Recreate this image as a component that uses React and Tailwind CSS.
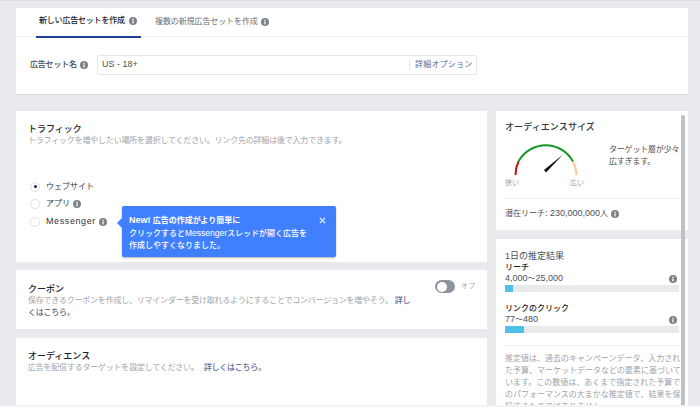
const font = { fontFamily: '"Liberation Sans", "Noto Sans CJK JP", sans-serif' };

function Info({ className = "" }) {
  return (
    <svg viewBox="0 0 10 10" className={`w-[8px] h-[8px] shrink-0 ${className}`}>
      <circle cx="5" cy="5" r="5" fill="#7d8288" />
      <rect x="4.2" y="4.2" width="1.6" height="3.8" fill="#fff" />
      <rect x="4.2" y="2" width="1.6" height="1.5" fill="#fff" />
    </svg>
  );
}

function Radio({ checked }) {
  return (
    <span className="w-[10px] h-[10px] rounded-full border border-[#dddfe2] bg-white flex items-center justify-center shrink-0">
      {checked && <span className="w-[3px] h-[3px] rounded-full bg-[#1d2129]" />}
    </span>
  );
}

function Gauge() {
  return (
    <svg width="76" height="36" viewBox="0 0 76 36" className="block">
      <path d="M2.5 35 A31 31 0 0 1 5.5 21.5" fill="none" stroke="#c2141b" strokeWidth="2" />
      <path d="M5.5 21.5 A31 31 0 0 1 60 21.5" fill="none" stroke="#149425" strokeWidth="2" />
      <path d="M60 21.5 A31 31 0 0 1 63.5 35" fill="none" stroke="#fdc99a" strokeWidth="2" />
      <path d="M31 30 L50 14.5 L33 32.5 Z" fill="#111" />
    </svg>
  );
}

function Bar({ width }) {
  return (
    <div className="h-[7px] bg-[#e9eaed] mt-[1px]">
      <div className="h-full bg-[#4fc0e8]" style={{ width }} />
    </div>
  );
}

export default function App() {
  return (
    <div style={font} className="relative w-[700px] h-[407px] overflow-hidden bg-[#e9eaed] text-[#1d2129]">
      <div className="h-[8px] border-t border-[#dddfe2]" />

      <section className="ml-[16px] w-[672px] h-[87px] bg-white border-b border-[#dddfe2]">
        <div className="h-[29px] flex pl-[20px] border-b border-[#f0f1f3]">
          <div className="w-[105px] h-[30px] border-b-[2px] border-[#1c3f94] flex items-center gap-[3px] pl-[3px] pb-[2px] text-[8px] tracking-[-0.2px] font-medium">
            新しい広告セットを作成 <Info className="ml-[1px]" />
          </div>
          <div className="ml-[14px] flex items-center gap-[3px] pb-[1px] text-[8px] tracking-[-0.1px] text-[#6b6f76]">
            複数の新規広告セットを作成 <Info />
          </div>
        </div>
        <div className="flex items-center pl-[14px] pt-[18px]">
          <div className="w-[67px] flex items-center gap-[3px] text-[8px] tracking-[-0.2px] font-medium text-[#444950]">
            広告セット名 <Info />
          </div>
          <div className="w-[380px] h-[20px] border border-[#e6e7ea] rounded-[2px] flex items-center">
            <span className="pl-[4px] flex-1 text-[9px] text-[#4b4f56]">US - 18+</span>
            <span className="h-[12px] border-l border-[#e6e7ea] pl-[5px] w-[67px] flex items-center text-[8px] tracking-[0.2px] text-[#5b6b95]">詳細オプション</span>
          </div>
        </div>
      </section>

      <div className="flex pl-[16px] pt-[16px] gap-[9px]">
        <main className="w-[471px] flex flex-col">
          <section className="h-[151px] bg-white pl-[12px] pt-[12px] relative">
            <h2 className="text-[9px] font-medium leading-[12px]">トラフィック</h2>
            <p className="text-[8px] leading-[11px] text-[#a0a3a8] tracking-[-0.2px]">トラフィックを増やしたい場所を選択してください。リンク先の詳細は後で入力できます。</p>
            <div className="mt-[35px] flex flex-col gap-[6.5px] text-[8px] text-[#30343a]">
              <div className="h-[11px] flex items-center gap-[6px] pl-[2px]"><Radio checked /> ウェブサイト</div>
              <div className="h-[11px] flex items-center gap-[6px] pl-[2px]"><Radio /> アプリ <Info className="-ml-[3px]" /></div>
              <div className="h-[11px] flex items-center gap-[6px] pl-[2px]"><Radio /> <span className="text-[9px] tracking-[0.6px]">Messenger</span> <Info className="-ml-[3px]" /></div>
            </div>
            <div className="absolute left-[106px] top-[95px] w-[214px] h-[51px] bg-[#4080ff] rounded-[2px] shadow-[0_1px_2px_rgba(0,0,0,0.3)] text-white text-[8px] leading-[12px] pl-[7px] pt-[8px] font-medium">
              <span className="absolute -left-[5px] top-[12px] w-0 h-0 border-y-[5px] border-y-transparent border-r-[5px] border-r-[#4080ff]" />
              <div className="font-bold"><span className="text-[9px]">New!</span> 広告の作成がより簡単に</div>
              <div>クリックすると<span className="text-[8.5px]">Messenger</span>スレッドが開く広告を</div>
              <div>作成しやすくなりました。</div>
              <svg viewBox="0 0 8 8" className="absolute right-[10px] top-[11px] w-[7px] h-[7px]">
                <path d="M1 1 L7 7 M7 1 L1 7" stroke="#dce8ff" strokeWidth="1.6" />
              </svg>
            </div>
          </section>

          <section className="mt-[8px] h-[59px] bg-white pl-[12px] pt-[13px] relative">
            <h2 className="text-[9px] font-medium leading-[12px]">クーポン</h2>
            <p className="w-[389px] text-[8px] leading-[12px] text-[#a0a3a8] tracking-[-0.22px]">
              保存できるクーポンを作成し、リマインダーを受け取れるようにすることでコンバージョンを増やそう。 <span className="text-[#5b6b95] font-medium">詳しくはこちら。</span>
            </p>
            <div className="absolute left-[419px] top-[10px] flex items-center gap-[6px]">
              <span className="w-[20px] h-[13px] rounded-full bg-[#8d949e] p-[1.5px]"><span className="block w-[10px] h-[10px] rounded-full bg-white" /></span>
              <span className="text-[7px] text-[#a0a3a8] tracking-[0.5px]">オフ</span>
            </div>
          </section>

          <section className="mt-[9px] h-[68px] bg-white pl-[12px] pt-[12px]">
            <h2 className="text-[9px] font-medium leading-[12px]">オーディエンス</h2>
            <p className="text-[8px] leading-[11px] text-[#a0a3a8] tracking-[-0.22px]">
              広告を配信するターゲットを設定してください。 <span className="text-[#5b6b95] font-medium ml-[3px]">詳しくはこちら。</span>
            </p>
          </section>
        </main>

        <aside className="w-[192px] flex flex-col">
          <section className="h-[119px] bg-white px-[9px] pt-[10px]">
            <h2 className="text-[9px] font-medium leading-[12px] tracking-[0.1px] text-[#30343a]">オーディエンスサイズ</h2>
            <div className="flex mt-[7px]">
              <div className="w-[103px]">
                <div className="pl-[8px]"><Gauge /></div>
                <div className="flex w-[79px] justify-between text-[7px] leading-[10px] text-[#a0a3a8] mt-[2px]">
                  <span>狭い</span><span>広い</span>
                </div>
              </div>
              <p className="ml-[3px] mt-[4px] text-[8px] leading-[12px] text-[#4b4f56] tracking-[-0.2px] w-[70px] whitespace-nowrap">ターゲット層が少々<br />広すぎます。</p>
            </div>
            <div className="border-t border-[#eceef0] mt-[10px] pt-[8px] flex items-center gap-[3px] text-[8px] leading-[12px] text-[#4b4f56]">
              <span>潜在リーチ<span className="text-[9px]">: 230,000,000</span>人</span> <Info />
            </div>
          </section>

          <section className="mt-[9px] h-[166px] bg-white px-[9px] pt-[11px] overflow-hidden">
            <h2 className="text-[9px] leading-[12px] text-[#4b4f56]">1日の推定結果</h2>
            <div className="text-[8px] font-medium leading-[11px]">リーチ</div>
            <div className="flex items-center justify-between pr-[2px] text-[8px] leading-[11px] text-[#4b4f56]"><span><span className="text-[9px]">4,000</span>〜<span className="text-[9px]">25,000</span></span> <Info /></div>
            <div className="w-[174px]"><Bar width="8px" /></div>
            <div className="text-[8px] font-medium leading-[11px] mt-[11px]">リンクのクリック</div>
            <div className="flex items-center justify-between pr-[2px] text-[8px] leading-[11px] text-[#4b4f56]"><span><span className="text-[9px]">77</span>〜<span className="text-[9px]">480</span></span> <Info /></div>
            <div className="w-[174px]"><Bar width="19px" /></div>
            <div className="border-t border-[#eceef0] mt-[12px] pt-[7px] text-[8px] leading-[12px] text-[#a0a3a8] w-[176px]">
              推定値は、過去のキャンペーンデータ、入力された予算、マーケットデータなどの要素に基づいています。この数値は、あくまで指定された予算でのパフォーマンスの大まかな推定値で、結果を保証するものではありません。
            </div>
          </section>
        </aside>
      </div>

      <div className="absolute left-[681px] top-[115px] w-[4px] h-[292px] rounded-t-full bg-[#c1c1c1]" />
      <div className="absolute left-0 right-0 bottom-0 h-[2px] bg-[#f2f3f5]" />
    </div>
  );
}
